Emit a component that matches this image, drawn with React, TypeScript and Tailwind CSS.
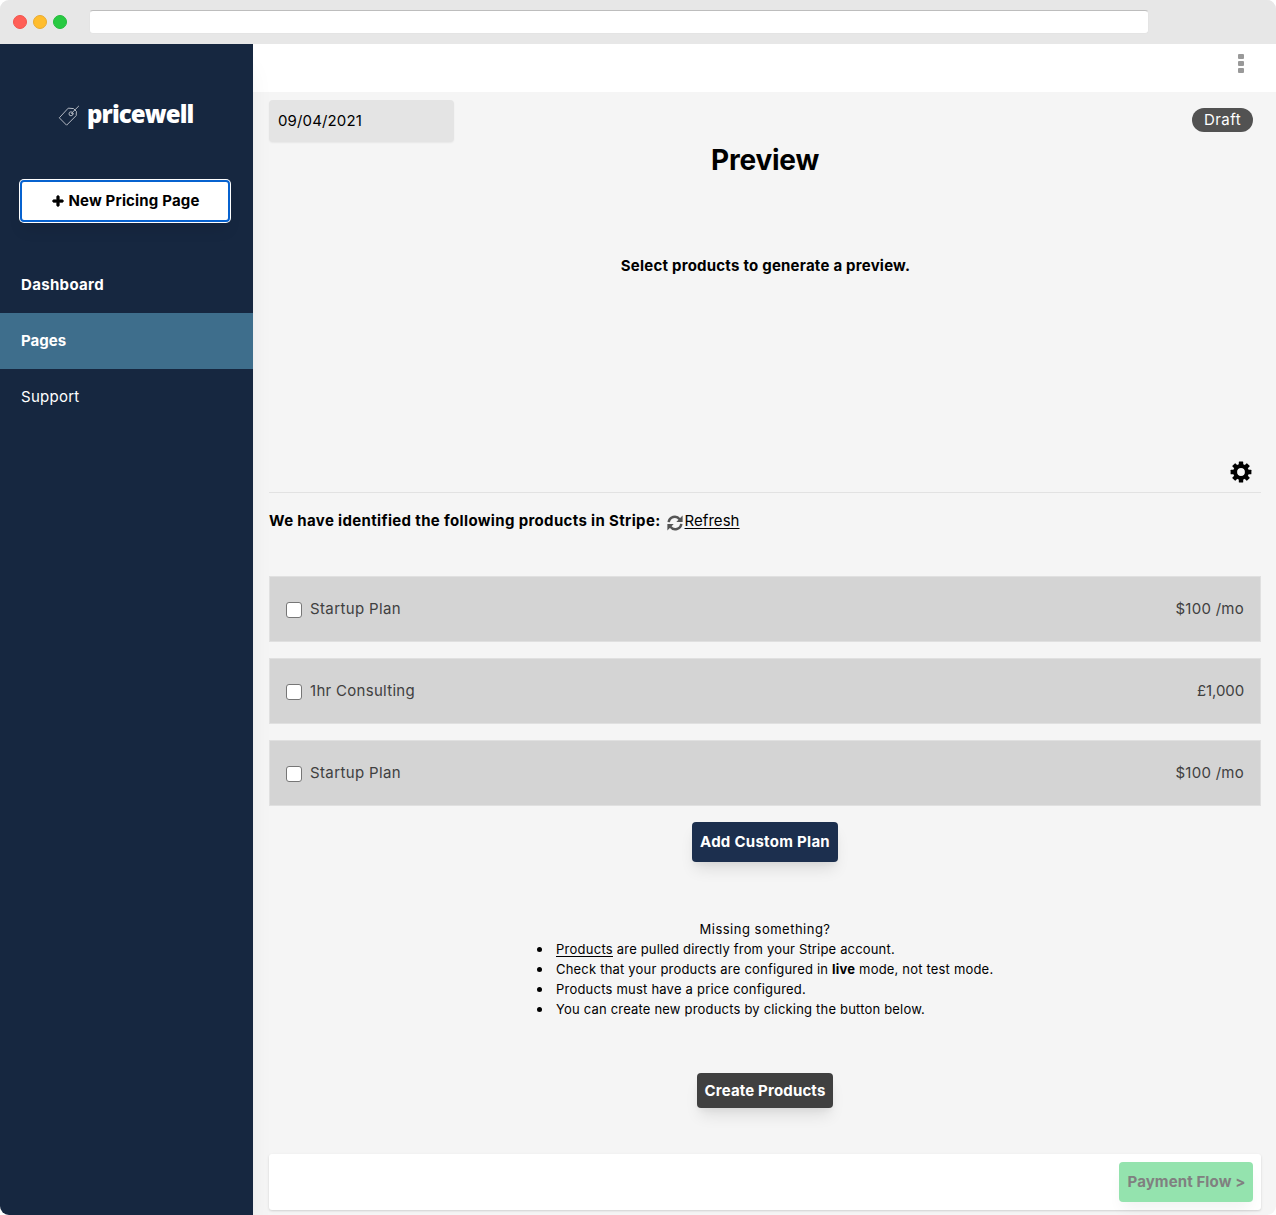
import { FaPlus } from "react-icons/fa";

const plans = [
  { name: "Startup Plan", price: "$100 /mo", nameCls: "tracking-[0.367px]", priceCls: "tracking-[0.27px]" },
  { name: "1hr Consulting", price: "£1,000", nameCls: "tracking-[0.292px]", priceCls: "tracking-[-0.099px]" },
  { name: "Startup Plan", price: "$100 /mo", nameCls: "tracking-[0.367px]", priceCls: "tracking-[0.27px]" },
];

const gearTeeth = [0, 45, 90, 135, 180, 225, 270, 315];

function TagIcon() {
  return (
    <svg width="22" height="22" viewBox="0 0 22 22" fill="none" stroke="#b4b9c2" strokeWidth="1" strokeLinejoin="round" strokeLinecap="round">
      <path d="M10.6 3.2 15.6 3.6 18.4 6.4 18.2 10.6 8.6 20.2 1.6 13.1z" />
      <circle cx="13" cy="8.8" r="2" />
      <path d="M13.3 8.5 20.6 1.2" />
    </svg>
  );
}

function GearIcon() {
  return (
    <svg width="22" height="22" viewBox="0 0 22 22">
      {gearTeeth.map((a) => (
        <rect key={a} x="8.8" y="0.6" width="4.4" height="6" rx="0.5" transform={`rotate(${a} 11 11)`} />
      ))}
      <circle cx="11" cy="11" r="5.9" fill="none" stroke="#000" strokeWidth="4" />
    </svg>
  );
}

function RefreshIcon() {
  return (
    <svg width="16" height="16" viewBox="0 0 16 16" className="mt-[3px] mr-[2px] ml-[6px]">
      <g fill="none" stroke="#555" strokeWidth="2.5">
        <path d="M1.7 7.2A6.1 6.1 0 0 1 12.6 4.2" />
        <path d="M14.3 8.8A6.1 6.1 0 0 1 3.4 11.8" />
      </g>
      <path d="M15.6 0.6V6.9H9.3z" fill="#555" />
      <path d="M0.4 15.4V9.1H6.7z" fill="#555" />
    </svg>
  );
}

function BrowserBar() {
  return (
    <header className="relative z-20 flex h-11 shrink-0 items-center bg-[#e7e7e7] pl-[13px]">
      <div className="flex gap-[6px]">
        <span className="h-[14px] w-[14px] rounded-full border border-[#f2544c] bg-[#ff5f57]" />
        <span className="h-[14px] w-[14px] rounded-full border border-[#e9ab30] bg-[#ffbd2e]" />
        <span className="h-[14px] w-[14px] rounded-full border border-[#22bb3c] bg-[#28ca42]" />
      </div>
      <div className="ml-[22px] h-6 w-[1060px] rounded border border-[#e4e4e4] border-t-[#bdbdbd] bg-white" />
    </header>
  );
}

function Sidebar() {
  return (
    <aside className="relative z-10 w-[253px] shrink-0 bg-[#162740] text-white shadow-[0_20px_25px_-5px_rgba(0,0,0,0.07),0_10px_10px_-5px_rgba(0,0,0,0.03)]">
      <div className="flex h-[136px] items-center pt-[8px] pl-[58px]">
        <TagIcon />
        <span className="ml-[7px] -mt-[5px] font-['Open_Sans'] text-2xl leading-8 font-extrabold tracking-[-0.9px]">pricewell</span>
      </div>
      <button className="ml-5 flex h-[42px] w-[210px] items-center justify-center gap-[5px] rounded border-2 border-[#0762cf] bg-white pl-px font-bold tracking-[0.163px] text-black shadow-[0_0_0_1px_#fff,0_10px_15px_-3px_rgba(0,0,0,0.1)]">
        <FaPlus size={12} stroke="#000" strokeWidth={40} />
        New Pricing Page
      </button>
      <nav className="mt-[35px]">
        <a className="flex h-14 items-center pl-[21px] font-bold tracking-[0.333px]">Dashboard</a>
        <a className="flex h-14 items-center bg-[#3e6e8c] pl-[21px] font-bold">Pages</a>
        <a className="flex h-14 items-center pl-[21px] tracking-[0.263px]">Support</a>
      </nav>
    </aside>
  );
}

function Dot() {
  return <span className="mr-[14px] ml-[2px] h-[5px] w-[5px] rounded-full bg-black" />;
}

function Help() {
  return (
    <section className="mt-[57px] flex flex-col items-center text-[13px] leading-5">
      <p className="tracking-[0.495px]">Missing something?</p>
      <ul className="w-[460px] whitespace-nowrap">
        <li className="flex items-center">
          <Dot />
          <span>
            <span className="tracking-[0.27px] underline underline-offset-2">Products</span>
            <span className="tracking-[0.17px]"> are pulled directly from your Stripe account.</span>
          </span>
        </li>
        <li className="flex items-center">
          <Dot />
          <span>
            <span className="tracking-[0.2px]">Check that your products are configured in </span>
            <b className="tracking-[0.2px]">live</b>
            <span className="tracking-[0.19px]"> mode, not test mode.</span>
          </span>
        </li>
        <li className="flex items-center">
          <Dot />
          <span className="tracking-[0.218px]">Products must have a price configured.</span>
        </li>
        <li className="flex items-center">
          <Dot />
          <span className="tracking-[0.189px]">You can create new products by clicking the button below.</span>
        </li>
      </ul>
    </section>
  );
}

export default function App() {
  return (
    <div className="h-[1215px] w-[1276px] bg-white">
      <div className="flex h-full flex-col overflow-hidden rounded-[9px] bg-[#f5f5f5] font-['Inter',sans-serif] text-[15px] leading-6 text-black">
        <BrowserBar />
        <div className="flex min-h-0 flex-1">
          <Sidebar />
          <main className="flex min-w-0 flex-1 flex-col">
            <div className="flex h-12 shrink-0 justify-end bg-white pt-[10px] pr-8">
              <div className="flex w-[6px] flex-col gap-[2px]">
                <span className="h-[5px] rounded-[1px] bg-[#999]" />
                <span className="h-[5px] rounded-[1px] bg-[#999]" />
                <span className="h-[5px] rounded-[1px] bg-[#999]" />
              </div>
            </div>
            <div className="flex flex-1 flex-col pt-2 pr-[15px] pl-4">
              <div className="flex h-[42px] justify-between pr-2">
                <div className="flex w-[185px] items-center rounded bg-[#e4e4e4] pl-[9px] tracking-[0.14px] shadow-[0_1px_2px_rgba(0,0,0,0.06)]">09/04/2021</div>
                <span className="mt-2 flex h-6 w-[61px] items-center justify-center rounded-full bg-[#525252] tracking-[0.431px] text-white">Draft</span>
              </div>
              <h1 className="text-center text-[28px] leading-9 font-bold tracking-[-0.217px]">Preview</h1>
              <p className="mt-[76px] pl-px text-center font-bold tracking-[0.229px]">Select products to generate a preview.</p>
              <div className="mt-[183px] flex h-[32px] justify-end border-b border-[#e2e2e2] pr-[9px]">
                <GearIcon />
              </div>
              <div className="mt-4 flex items-center whitespace-nowrap">
                <span className="font-bold tracking-[0.345px]">We have identified the following products in Stripe:</span>
                <RefreshIcon />
                <a className="tracking-[0.047px] underline underline-offset-2">Refresh</a>
              </div>
              <div className="mt-[43px] flex flex-col gap-4">
                {plans.map((p, i) => (
                  <div key={i} className="flex h-[66px] items-center border border-[#e0e0e0] bg-[#d4d4d4] px-4 text-[#404040]">
                    <span className="mt-[2px] mr-2 h-4 w-4 rounded-[3px] border border-[#767676] bg-white" />
                    <span className={p.nameCls}>{p.name}</span>
                    <span className={`ml-auto ${p.priceCls}`}>{p.price}</span>
                  </div>
                ))}
              </div>
              <button className="mx-auto mt-4 h-10 w-[146px] shrink-0 rounded bg-[#1c2f4e] font-bold tracking-[0.281px] whitespace-nowrap text-white shadow-[0_10px_15px_-3px_rgba(0,0,0,0.1),0_4px_6px_-2px_rgba(0,0,0,0.05)]">Add Custom Plan</button>
              <Help />
              <button className="mx-auto mt-[54px] h-[35px] w-[136px] shrink-0 rounded bg-[#404040] font-bold tracking-[0.165px] whitespace-nowrap text-white shadow-[0_10px_15px_-3px_rgba(0,0,0,0.1),0_4px_6px_-2px_rgba(0,0,0,0.05)]">Create Products</button>
              <footer className="mt-[46px] flex h-14 justify-end rounded-[3px] bg-white p-2 shadow-[0_1px_3px_rgba(0,0,0,0.1),0_1px_2px_rgba(0,0,0,0.06)]">
                <button className="h-10 w-[134px] rounded bg-[#94e3ae] pl-px font-bold tracking-[0.116px] whitespace-nowrap text-[#808080] shadow-[0_10px_15px_-3px_rgba(0,0,0,0.05)]">Payment Flow &gt;</button>
              </footer>
            </div>
          </main>
        </div>
      </div>
    </div>
  );
}
